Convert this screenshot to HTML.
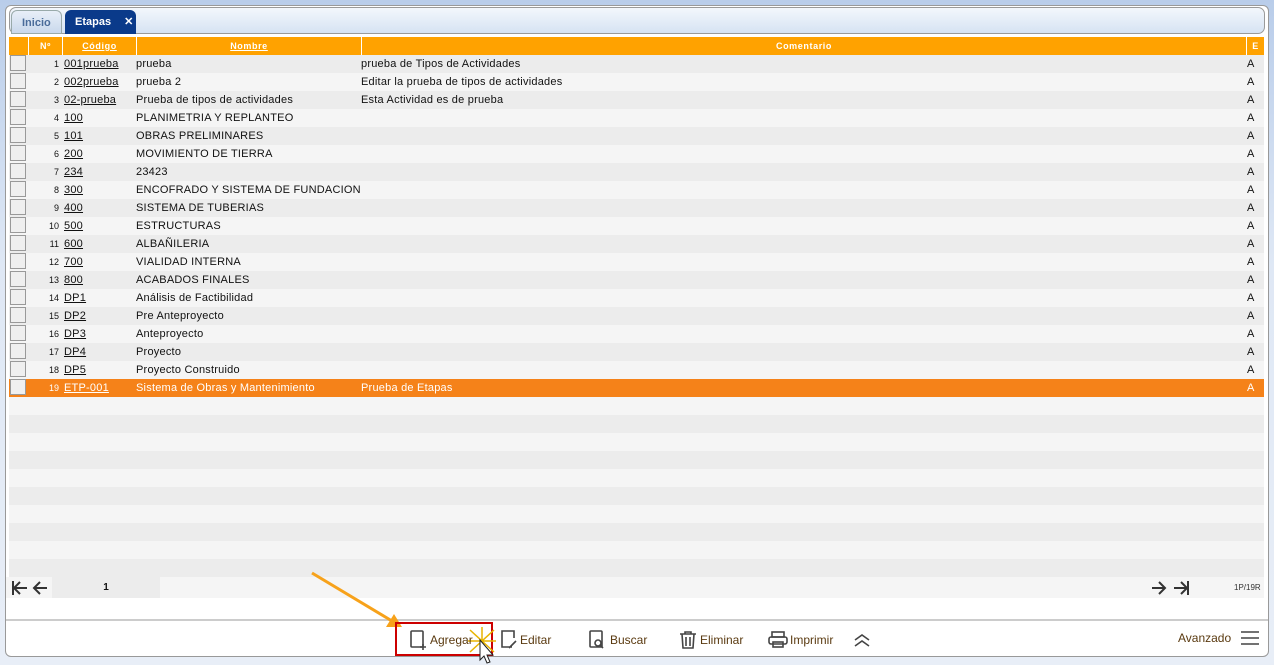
<!DOCTYPE html>
<html><head><meta charset="utf-8">
<style>
*{margin:0;padding:0;box-sizing:border-box}
body{width:1274px;height:665px;overflow:hidden;background:linear-gradient(#b9cdea,#dfe8f5 40%,#e8eef7);font-family:"Liberation Sans",sans-serif;font-size:11px;color:#111;position:relative}
.panel{position:absolute;left:5px;top:5px;width:1264px;height:652px;background:#fff;border:1px solid #999;border-radius:6px}
.tabbar{position:absolute;left:9px;top:7px;width:1256px;height:27px;border:1px solid #9a9a9a;border-radius:7px;background:linear-gradient(#f3f7fc,#d6e3f3)}
.tab{position:absolute;top:10px;height:24px;border-radius:6px 6px 0 0;font-weight:bold;font-size:11px;line-height:24px;padding-left:10px}
.t1{left:11px;width:51px;background:linear-gradient(#e8eff8,#c9d8ec);border:1px solid #9aa;color:#4a6c9a}
.t2{left:65px;width:71px;background:#0a3a8a;color:#fff}
.row{position:absolute;left:9px;width:1255px;height:18px;line-height:19px;white-space:nowrap}
.row span{position:absolute;top:0}
.row span.nm,.row span.cm,.row span.c{letter-spacing:.22px}
.hd{top:37px;background:#ffa200;color:#fff;font-weight:bold;font-size:9px;letter-spacing:.6px}
.hd span{text-align:center;border-left:1px solid #fff;height:18px}
.cb{left:1px;top:1px;width:16px;height:16px;border:1px solid #999;background:#efefef}
.n{left:19px;width:31px;text-align:right;font-size:9px}
.c{left:55px;text-decoration:underline}
.nm{left:127px}.cm{left:352px}.e{left:1238px}
.sel{background:#f58219;color:#fff}
.sel .c{color:#fff}
.sel .cb{background:#f0f0f0}
</style></head><body>
<div class="panel"></div>
<div class="tabbar"></div>
<div class="tab t1">Inicio</div>
<div class="tab t2">Etapas <span style="margin-left:10px">✕</span></div>
<div class="row hd">
<span style="left:0;width:19px;border:none"></span>
<span style="left:19px;width:34px">Nº</span>
<span style="left:53px;width:74px;text-decoration:underline">Código</span>
<span style="left:127px;width:225px;text-decoration:underline">Nombre</span>
<span style="left:352px;width:885px">Comentario</span>
<span style="left:1237px;width:18px">E</span>
</div>
<div id="rows"></div>
<script>
var d=[["001prueba","prueba","prueba de Tipos de Actividades"],["002prueba","prueba 2","Editar la prueba de tipos de actividades"],["02-prueba","Prueba de tipos de actividades","Esta Actividad es de prueba"],["100","PLANIMETRIA Y REPLANTEO",""],["101","OBRAS PRELIMINARES",""],["200","MOVIMIENTO DE TIERRA",""],["234","23423",""],["300","ENCOFRADO Y SISTEMA DE FUNDACION",""],["400","SISTEMA DE TUBERIAS",""],["500","ESTRUCTURAS",""],["600","ALBAÑILERIA",""],["700","VIALIDAD INTERNA",""],["800","ACABADOS FINALES",""],["DP1","Análisis de Factibilidad",""],["DP2","Pre Anteproyecto",""],["DP3","Anteproyecto",""],["DP4","Proyecto",""],["DP5","Proyecto Construido",""],["ETP-001","Sistema de Obras y Mantenimiento","Prueba de Etapas"]];
var h="";
for(var i=0;i<29;i++){var y=55+i*18;var bg=i%2?"#f5f5f5":"#ececec";
if(i<19){var r=d[i];h+='<div class="row'+(i==18?' sel':'')+'" style="top:'+y+'px;background:'+(i==18?'#f58219':bg)+'"><span class="cb"></span><span class="n">'+(i+1)+'</span><span class="c">'+r[0]+'</span><span class="nm">'+r[1]+'</span><span class="cm">'+r[2]+'</span><span class="e">A</span></div>';}
else h+='<div class="row" style="top:'+y+'px;height:'+(i==28?(577-y):18)+'px;background:'+bg+'"></div>';}
document.getElementById("rows").innerHTML=h;
</script>
<div style="position:absolute;left:6px;top:577px;width:1258px;height:21px;background:#f5f5f5"></div>
<div style="position:absolute;left:52px;top:577px;width:108px;height:21px;background:#ececec;text-align:center;line-height:21px;font-size:10px;font-weight:bold">1</div>
<div style="position:absolute;left:1234px;top:583px;font-size:8px;color:#333">1P/19R</div>
<div style="position:absolute;left:6px;top:619px;width:1262px;height:2px;background:#ccc"></div>
<svg style="position:absolute;left:0;top:0" width="1274" height="665">
<g fill="none" stroke="#333" stroke-width="2">
<path d="M13 581v14M14 588h13M20 582l-6 6 6 6"/>
<path d="M34 588h13M40 582l-6 6 6 6"/>
<path d="M1152 588h13M1159 582l6 6-6 6"/>
<path d="M1174 588h13M1181 582l6 6-6 6M1188 581v14"/>
</g>
<line x1="312" y1="573" x2="392" y2="621" stroke="#f7a21b" stroke-width="3"/>
<polygon points="402,627 386,627 394,614" fill="#f7a21b"/>
<rect x="396" y="623" width="96" height="32" fill="none" stroke="#c00" stroke-width="2"/>
<g fill="none" stroke="#444" stroke-width="1.6">
<rect x="411" y="631" width="12" height="16" rx="1"/><path d="M423 644v6M420 647h6"/>
<path d="M512 647h-10v-16h12v7M509 648l7-7"/>
<rect x="590" y="631" width="12" height="16" rx="1"/><circle cx="598" cy="643" r="3"/><path d="M600 645l3 3"/>
<path d="M680 634h16M685 634v-2h6v2M682 634l1 14h10l1-14M686 637v9M690 637v9"/>
<rect x="772" y="632" width="12" height="5"/><rect x="769" y="637" width="18" height="7" rx="2"/><rect x="773" y="642" width="10" height="5"/>
<path d="M855 640l7-5 7 5M855 646l7-5 7 5"/>
<path d="M1241 632h18M1241 638h18M1241 644h18"/>
</g>
<g stroke="#e8b400" stroke-width="1.5"><path d="M470 630l24 22M494 630l-24 22M468 641h28M482 627v28"/></g>
<path d="M480 640l0 20 4-4 3 7 3-1-3-7 6 0z" fill="#fff" stroke="#222" stroke-width="1"/>
</svg>
<div style="position:absolute;left:430px;top:633px;font-size:12px;color:#5a3a10">Agregar</div>
<div style="position:absolute;left:520px;top:633px;font-size:12px;color:#5a3a10">Editar</div>
<div style="position:absolute;left:610px;top:633px;font-size:12px;color:#5a3a10">Buscar</div>
<div style="position:absolute;left:700px;top:633px;font-size:12px;color:#5a3a10">Eliminar</div>
<div style="position:absolute;left:790px;top:633px;font-size:12px;color:#5a3a10">Imprimir</div>
<div style="position:absolute;left:1178px;top:631px;font-size:12px;color:#5a3a10">Avanzado</div>
</body></html>
